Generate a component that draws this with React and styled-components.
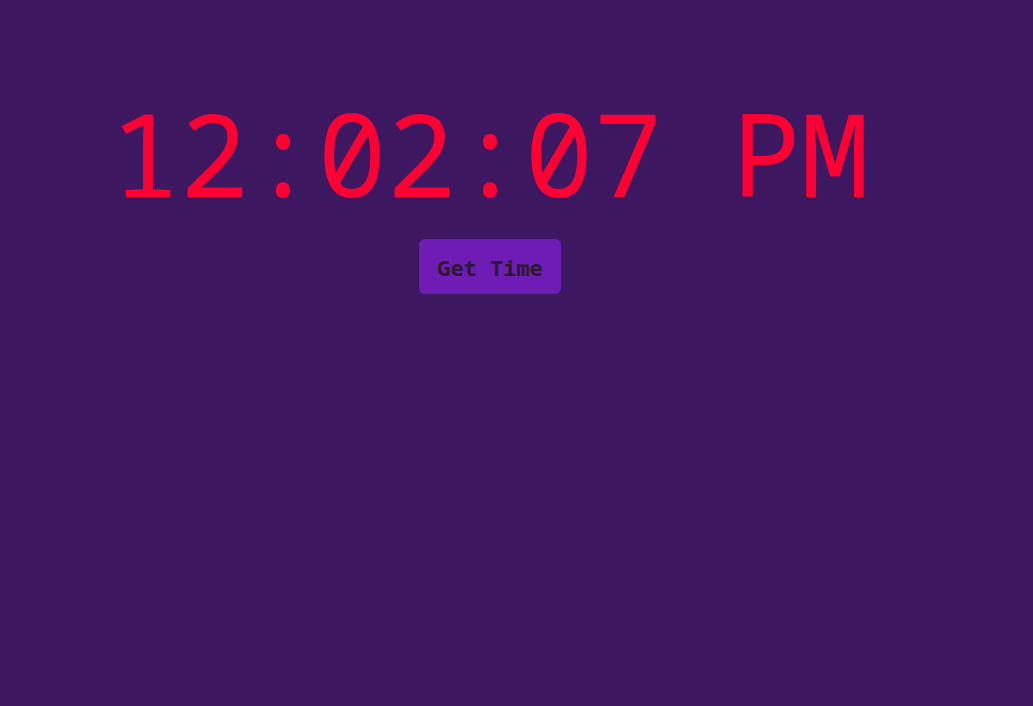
import styled, { createGlobalStyle } from 'styled-components'

const GlobalStyle = createGlobalStyle`
   html, body {
      margin: 0;
      padding: 0;
      background-color: #3e1761;
   }
`

const Page = styled.div`
   width: 980px;
   min-height: 706px;
   padding-top: 74px;
   box-sizing: border-box;
   display: flex;
   flex-direction: column;
   align-items: center;
   gap: 8px;
`

const Clock = styled.h1`
   margin: 0;
   color: #ff0033;
   font-family: 'Noto Sans Mono', 'DejaVu Sans Mono', monospace;
   font-size: 115px;
   font-weight: normal;
   line-height: 157px;
`

const TimeButton = styled.button`
   padding: 12.5px 18px;
   border: none;
   border-radius: 6px;
   background-color: #6f1cb6;
   color: #2b1a2e;
   font-family: 'Noto Sans Mono', 'DejaVu Sans Mono', monospace;
   font-size: 22px;
   font-weight: bold;
   line-height: 30px;
   cursor: pointer;

   &:hover {
      background-color: #7d28c4;
   }
`

function App() {
   return (
      <>
         <GlobalStyle />
         <Page>
            <Clock>12:02:07 PM</Clock>
            <TimeButton>Get Time</TimeButton>
         </Page>
      </>
   )
}

export default App
